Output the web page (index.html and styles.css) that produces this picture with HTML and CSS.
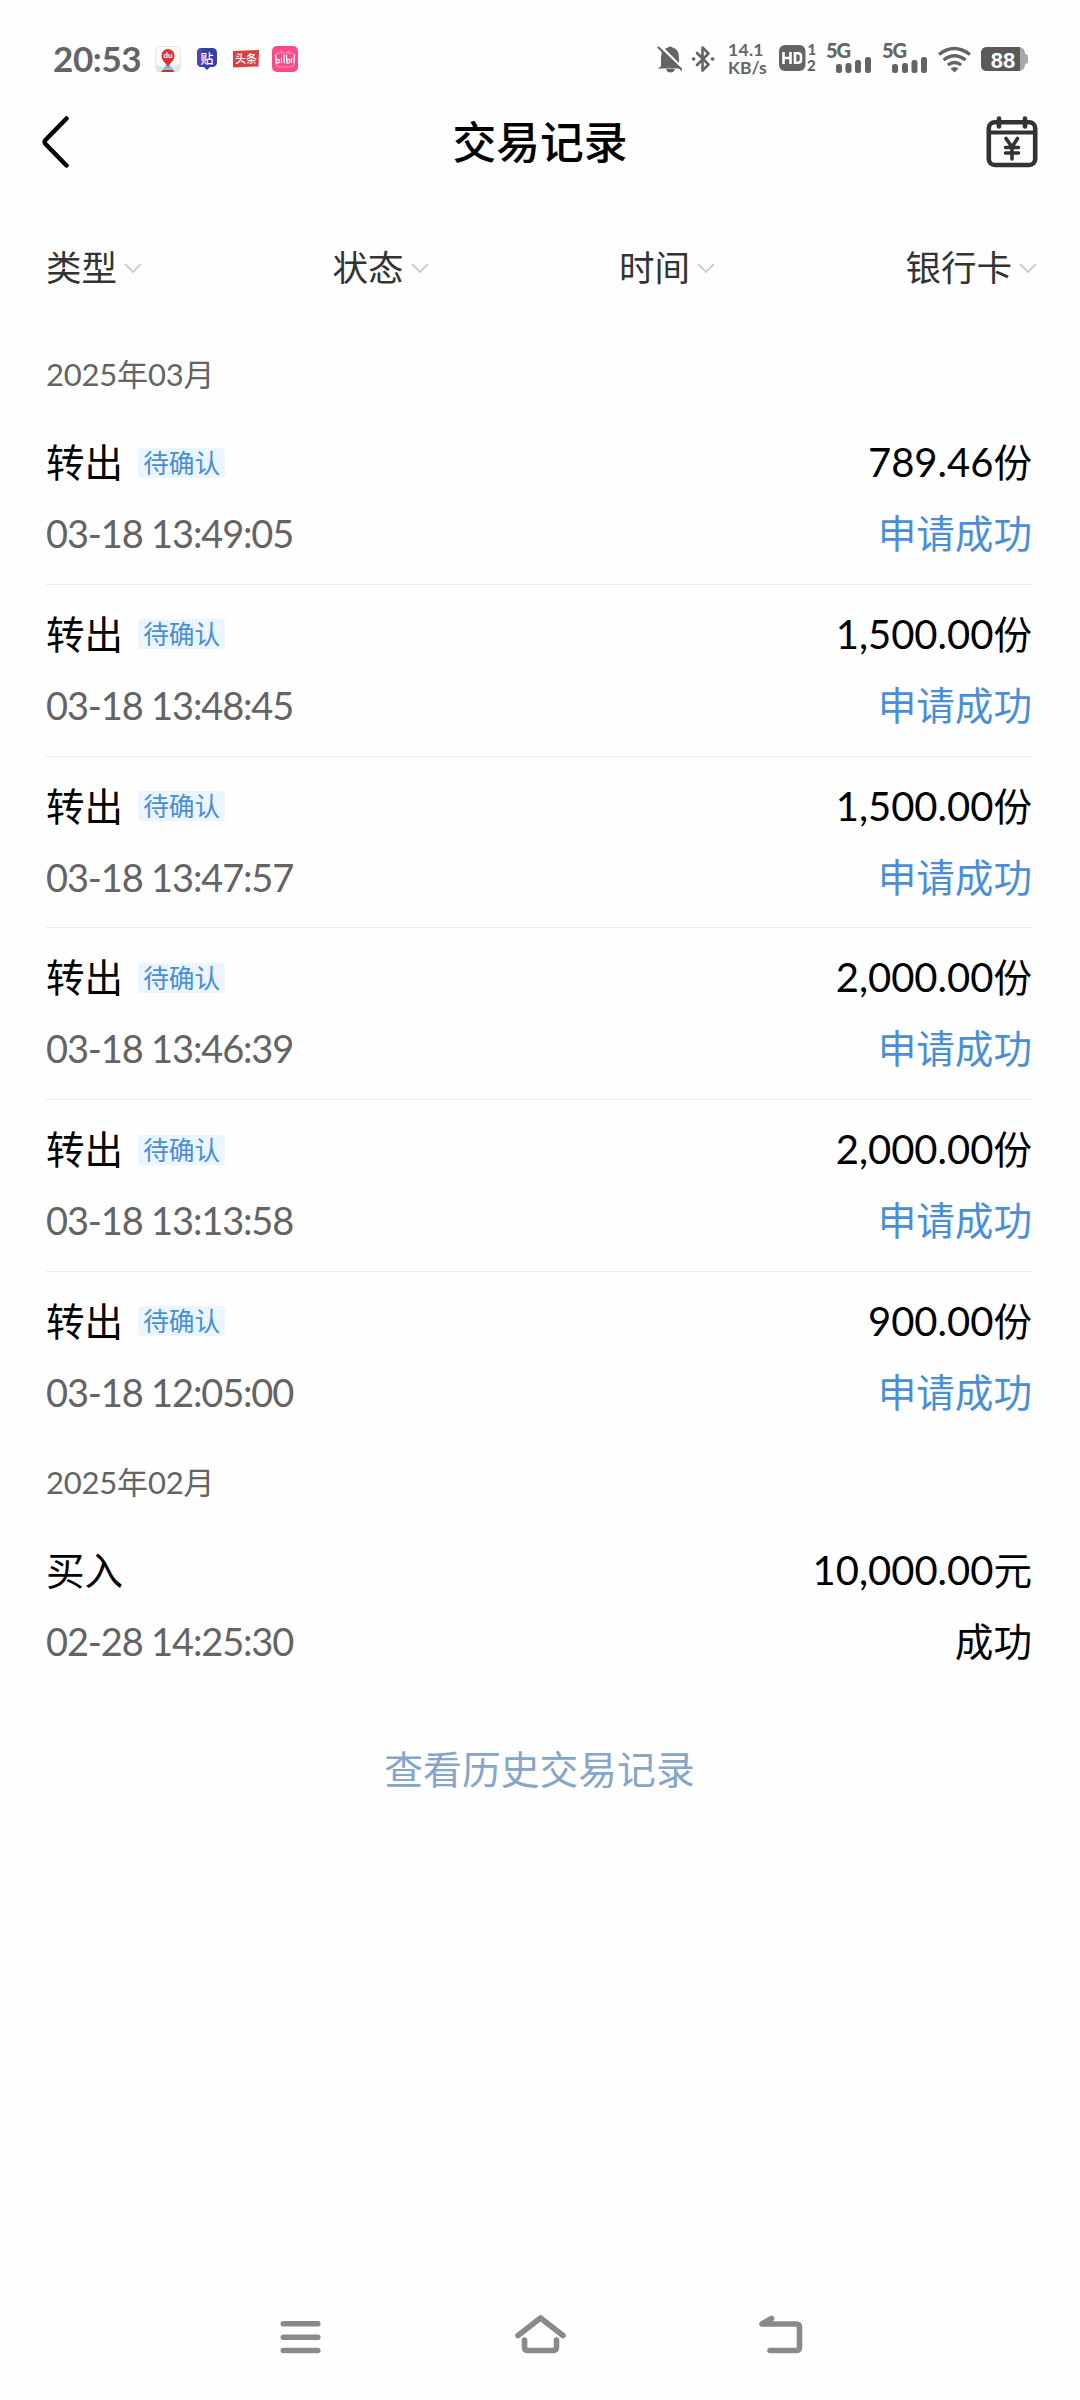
FILE: index.html
```
<!DOCTYPE html>
<html lang="zh-CN">
<head>
    <meta charset="UTF-8">
    <meta name="viewport" content="width=device-width, initial-scale=1.0">
    <title>交易记录</title>
    <link rel="stylesheet" href="styles.css">
</head>
<body>
    <!-- 状态栏 -->
    <div class="status-bar">
        <span class="clock">20:53</span>
        <svg class="app-icons" width="148" height="32" viewBox="152 43 148 32">
            <rect x="155.5" y="46.5" width="25" height="25" rx="5" fill="#fafafa" stroke="#e6e6e6"/>
            <path d="M156 65l9 2-3 5h-3q-3 0-3-3z" fill="#d5ecd2"/>
            <path d="M180 64l-9 3 3 5h3q3 0 3-3z" fill="#d8ebf5"/>
            <path d="M166 65h4l5 7h-14z" fill="#9bb4d8"/>
            <path d="M163 70h10l1 2h-13z" fill="#c03a3a"/>
            <path d="M168 67c-2-4-6.500-6-6.500-11.500a6.500 6.500 0 0 1 13 0c0 5.500-4.500 7.500-6.500 11.500z" fill="#dc3232"/>
            <text x="168" y="58" class="icon-du">du</text>
            <path d="M202 48h10q5 0 5 5v9q0 5-5 5h-2l-3 3-3-3h-2q-5 0-5-5v-9q0-5 5-5z" fill="#3340a6"/>
            <path d="M202 48q-5 0-5 5v9q0 5 5 5z" fill="#5a3fb0"/>
            <text x="207" y="63" class="icon-tie">贴</text>
            <path d="M233 51l26-1-.5 16.500-25.500 1z" fill="#db4040"/>
            <text x="246" y="63" class="icon-tou">头条</text>
            <rect x="272" y="46" width="26" height="26" rx="5" fill="#fb4a88"/>
            <path d="M280 50l3 3M290 50l-3 3M279 53h12q3 0 3 3v8q0 3-3 3h-12q-3 0-3-3v-8q0-3 3-3z" fill="none" stroke="#fd7eab" stroke-width="1.500"/>
            <path d="M275.500 55l1 8q3 .5 3-2t-3-1M281.500 58v4.500M284 55l.5 8M286.500 55l.5 8q3 .5 3-2t-3-1M291.500 58v4.500M294.500 55l-.5 8" fill="none" stroke="#fff" stroke-width="1.200" stroke-linecap="round"/>
        </svg>
        <svg class="bell" width="25" height="28" viewBox="657 45 25 28">
            <path d="M661 66v-9q0-8 7-9.500a3 3 0 0 1 4.500 0q6.500 1.500 6.500 9.500v8l2.500 3.500H658z" fill="#646464"/>
            <path d="M666 69h9q-1 3.500-4.500 3.500T666 69z" fill="#646464"/>
            <path d="M659.500 45.500l23 23" stroke="#fefefe" stroke-width="3"/>
            <path d="M658.500 47.500l23 22" stroke="#646464" stroke-width="2.200" stroke-linecap="round"/>
        </svg>
        <svg class="bluetooth" width="24" height="28" viewBox="691 45 24 28" fill="none" stroke="#646464" stroke-width="2.600" stroke-linejoin="round" stroke-linecap="round">
            <path d="M697 53l11.500 11.500-6 6V47.500l6 6L697 65"/>
            <path d="M693.500 59h.2M712.500 59h.2" stroke-width="3.600"/>
        </svg>
        <div class="net-speed"><span class="rate">14.1</span><span>KB/s</span></div>
        <svg class="signals" width="150" height="42" viewBox="778 39 150 42" fill="#646464">
            <rect x="779" y="46" width="26.500" height="26" rx="6"/>
            <path d="M783.500 53v12M790.500 53v12M783.500 59h7M795 54.300h3q3 0 3 3v3.500q0 3-3 3h-3z" fill="none" stroke="#fefefe" stroke-width="2.600"/>
            <text x="807.500" y="56" class="sim">1</text>
            <text x="807" y="71.500" class="sim">2</text>
            <text x="826" y="58.500" class="g5">5G</text>
            <rect x="836" y="65" width="6" height="9" rx="2.500"/>
            <rect x="845.500" y="64" width="6" height="10" rx="2.500"/>
            <rect x="855" y="61" width="6" height="13" rx="2.500"/>
            <rect x="865" y="58" width="6" height="16" rx="2.500"/>
            <text x="882" y="58.500" class="g5">5G</text>
            <rect x="892" y="65" width="6" height="9" rx="2.500"/>
            <rect x="902" y="64" width="6" height="10" rx="2.500"/>
            <rect x="911.500" y="61" width="6" height="13" rx="2.500"/>
            <rect x="921" y="58" width="6" height="16" rx="2.500"/>
        </svg>
        <svg class="wifi" width="34" height="28" viewBox="937 45 34 28" fill="none" stroke="#646464" stroke-width="3.200">
            <path d="M939 54.500q15-12 31 0M943.500 60q11-8.500 22 0M947.800 65q6.700-5 13.400 0"/>
            <path d="M950.500 68.500q4-3 8 0l-4 4z" fill="#646464" stroke="none"/>
        </svg>
        <svg class="battery" width="48" height="26" viewBox="981 47 48 26">
            <rect x="981" y="48" width="44" height="24" rx="6" fill="#a8a8a8"/>
            <path d="M1025 55q3 0 3 2.500v5q0 2.500-3 2.500z" fill="#a8a8a8"/>
            <path d="M987 48h33v24h-33q-6 0-6-6V54q0-6 6-6z" fill="#5a5a5a"/>
            <text x="1003" y="68.500" class="level">88</text>
        </svg>
    </div>

    <!-- 标题栏 -->
    <header class="nav-bar">
        <svg class="back" width="28" height="52" viewBox="0 0 28 52">
            <path d="M25.500 2.500L4.500 24q-1.700 2 0 4l21 21.500" fill="none" stroke="#000" stroke-width="4.500" stroke-linecap="round"/>
        </svg>
        <h1>交易记录</h1>
        <svg class="calendar" width="52" height="52" viewBox="0 0 52 52" fill="none" stroke="#333" stroke-width="4.600" stroke-linecap="round">
            <rect x="2.800" y="6.300" width="46.400" height="42.700" rx="6"/>
            <path d="M3 16.500h46" stroke-width="4"/>
            <path d="M13 2.500v8M39 2.500v8"/>
            <path d="M20 22.500l6 8.500 5.500-8.500M26 31v12M19.500 31.500h13M19.500 37h13" stroke-width="3.600"/>
        </svg>
    </header>

    <!-- 筛选 -->
    <div class="filters">
        <div class="filter">类型<svg width="18" height="11" viewBox="0 0 18 11"><path d="M1 1l8 8 8-8"/></svg></div>
        <div class="filter">状态<svg width="18" height="11" viewBox="0 0 18 11"><path d="M1 1l8 8 8-8"/></svg></div>
        <div class="filter">时间<svg width="18" height="11" viewBox="0 0 18 11"><path d="M1 1l8 8 8-8"/></svg></div>
        <div class="filter">银行卡<svg width="18" height="11" viewBox="0 0 18 11"><path d="M1 1l8 8 8-8"/></svg></div>
    </div>

    <!-- 交易列表 -->
    <main class="records">
        <h2 class="month">2025年03月</h2>
        <div class="record">
            <div class="line"><span class="type">转出</span><span class="tag">待确认</span><span class="amount">789.46<b>份</b></span></div>
            <div class="line"><span class="time">03-18 13:49:05</span><span class="state pending">申请成功</span></div>
        </div>
        <div class="record">
            <div class="line"><span class="type">转出</span><span class="tag">待确认</span><span class="amount">1,500.00<b>份</b></span></div>
            <div class="line"><span class="time">03-18 13:48:45</span><span class="state pending">申请成功</span></div>
        </div>
        <div class="record">
            <div class="line"><span class="type">转出</span><span class="tag">待确认</span><span class="amount">1,500.00<b>份</b></span></div>
            <div class="line"><span class="time">03-18 13:47:57</span><span class="state pending">申请成功</span></div>
        </div>
        <div class="record">
            <div class="line"><span class="type">转出</span><span class="tag">待确认</span><span class="amount">2,000.00<b>份</b></span></div>
            <div class="line"><span class="time">03-18 13:46:39</span><span class="state pending">申请成功</span></div>
        </div>
        <div class="record">
            <div class="line"><span class="type">转出</span><span class="tag">待确认</span><span class="amount">2,000.00<b>份</b></span></div>
            <div class="line"><span class="time">03-18 13:13:58</span><span class="state pending">申请成功</span></div>
        </div>
        <div class="record last">
            <div class="line"><span class="type">转出</span><span class="tag">待确认</span><span class="amount">900.00<b>份</b></span></div>
            <div class="line"><span class="time">03-18 12:05:00</span><span class="state pending">申请成功</span></div>
        </div>

        <h2 class="month">2025年02月</h2>
        <div class="record last">
            <div class="line"><span class="type">买入</span><span class="amount">10,000.00<b>元</b></span></div>
            <div class="line"><span class="time">02-28 14:25:30</span><span class="state">成功</span></div>
        </div>
        <a class="history">查看历史交易记录</a>
    </main>

    <!-- 系统导航键 -->
    <footer class="system-nav">
        <svg width="52" height="40" viewBox="274 2315 52 40"><path d="M283.300 2323.800h34.500M283.300 2337.300h34.500M283.300 2350.500h34.500"/></svg>
        <svg width="52" height="40" viewBox="515 2315 52 40"><path d="M518 2335.500l22.500-17.500 22.500 17.500M524.500 2340v7q0 3.500 3.500 3.500h25q3.500 0 3.500-3.500v-7"/></svg>
        <svg width="52" height="40" viewBox="755 2315 52 40"><path d="M771.500 2318.500l-9.500 5.500h34q3.500 0 3.500 3.500v19.500q0 3.500-3.500 3.500h-26"/></svg>
    </footer>
</body>
</html>
```
FILE: styles.css
```
* {
    box-sizing: border-box;
}
body {
    margin: 0;
    width: 1080px;
    height: 2400px;
    display: flex;
    flex-direction: column;
    background: #fefefe;
    color: #000;
    font-family: Lato, "Noto Sans CJK SC", sans-serif;
}
svg {
    display: block;
    flex: none;
}

/* 状态栏 */
.status-bar {
    display: flex;
    align-items: center;
    height: 118px;
    padding-left: 53px;
    color: #646464;
}
.clock {
    width: 99px;
    font-size: 35px;
    font-weight: 700;
    line-height: 40px;
    letter-spacing: -0.4px;
    padding-bottom: 2px;
}
.bell {
    margin-left: 357px;
}
.bluetooth {
    margin-left: 9px;
}
.net-speed {
    width: 50px;
    margin-left: 13px;
    display: flex;
    flex-direction: column;
    font-size: 17.5px;
    font-weight: 700;
    line-height: 18px;
}
.rate {
    letter-spacing: 0.3px;
}
.wifi {
    margin-left: 9px;
}
.battery {
    margin-left: 10px;
}
.icon-du {
    font: 700 8px Lato, sans-serif;
    fill: #fff;
    text-anchor: middle;
}
.icon-tie {
    font: 500 13px "Noto Sans CJK SC", sans-serif;
    fill: #fff;
    text-anchor: middle;
}
.icon-tou {
    font: 500 11px "Noto Sans CJK SC", sans-serif;
    fill: #fff;
    text-anchor: middle;
}
.sim {
    font: 900 15px Lato, sans-serif;
}
.g5 {
    font: 900 20px Lato, sans-serif;
    letter-spacing: -1px;
}
.level {
    font: 700 22px "Liberation Sans", sans-serif;
    fill: #fff;
    text-anchor: middle;
}

/* 标题栏 */
.nav-bar {
    display: flex;
    align-items: center;
    justify-content: space-between;
    height: 48px;
    padding: 0 42px 0 41px;
}
.nav-bar h1 {
    margin: 0 0 0 25px;
    font-size: 43.8px;
    font-weight: 500;
    line-height: 48px;
}

/* 筛选 */
.filters {
    display: flex;
    justify-content: space-between;
    height: 48px;
    margin-top: 78px;
    padding: 0 43px 0 46px;
}
.filter {
    display: flex;
    align-items: center;
    gap: 7px;
    color: #333;
    font-size: 35.5px;
    line-height: 48px;
}
.filter svg {
    fill: none;
    stroke: #ccc;
    stroke-width: 1.8;
}

/* 交易列表 */
.records {
    flex: 1;
    display: flex;
    flex-direction: column;
    margin: 43px 47px 0 46px;
}
.month {
    margin: 0;
    height: 78px;
    color: #646464;
    font-size: 31px;
    font-weight: 400;
    line-height: 78px;
    letter-spacing: -0.2px;
}
.record {
    height: 171.8px;
    padding-top: 14px;
    border-bottom: 1.5px solid #ebebeb;
}
.record.last {
    height: 171px;
    border-bottom: none;
}
.line {
    display: flex;
    align-items: center;
    height: 71px;
    font-size: 38.6px;
    line-height: 71px;
}
.tag {
    height: 30px;
    margin-left: 15px;
    padding: 0 5px;
    border-radius: 4px;
    background: #eaf5fe;
    color: #4a8fd6;
    font-size: 25.7px;
    line-height: 30px;
}
.amount,
.state {
    margin-left: auto;
    padding-right: 1px;
}
.amount {
    font-size: 40px;
}
.amount b {
    font-size: 38.6px;
    font-weight: 400;
}
.time {
    color: #646464;
    font-size: 38px;
    letter-spacing: -1.15px;
}
.pending {
    color: #4a8fd6;
}
.history {
    margin-top: 41px;
    color: #86a5c9;
    font-size: 38.8px;
    line-height: 72px;
    text-align: center;
}

/* 系统导航键 */
.system-nav {
    display: flex;
    justify-content: space-between;
    height: 85px;
    padding: 0 273px 0 274px;
}
.system-nav svg {
    fill: none;
    stroke: #8a8a8a;
    stroke-width: 5.6;
    stroke-linecap: round;
    stroke-linejoin: round;
}
```
